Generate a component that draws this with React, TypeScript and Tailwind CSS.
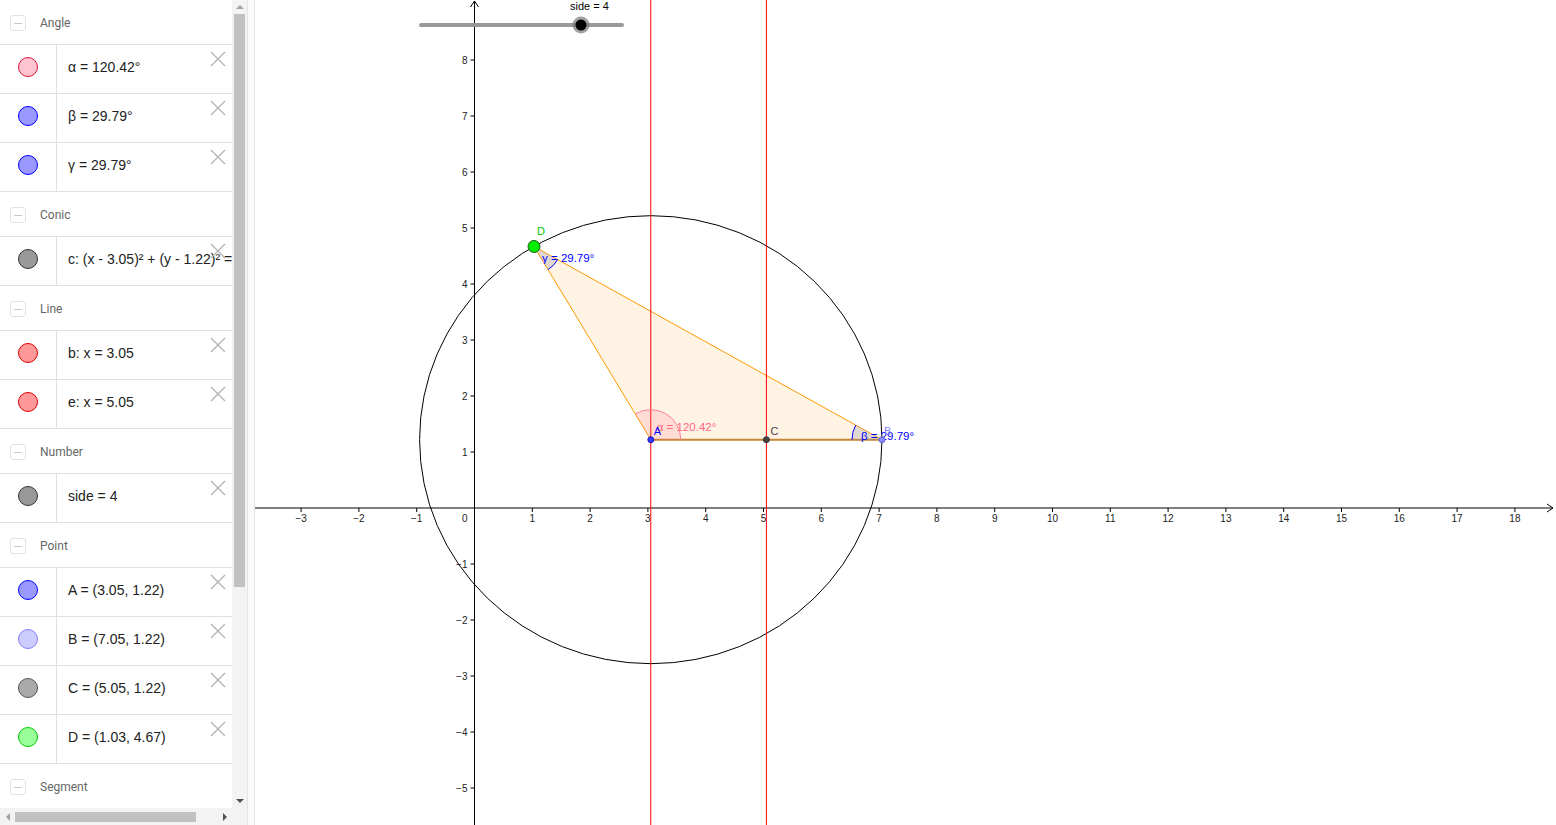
import React from 'react';

type Item = { text: string; fill: string; stroke: string };
type Section = { title: string; items: Item[] };

const sections: Section[] = [
  {
    title: 'Angle',
    items: [
      { text: 'α = 120.42°', fill: '#ffc4d0', stroke: '#dc143c' },
      { text: 'β = 29.79°', fill: '#9999ff', stroke: '#0000ff' },
      { text: 'γ = 29.79°', fill: '#9999ff', stroke: '#0000ff' },
    ],
  },
  {
    title: 'Conic',
    items: [{ text: 'c: (x - 3.05)² + (y - 1.22)² = 16', fill: '#999999', stroke: '#333333' }],
  },
  {
    title: 'Line',
    items: [
      { text: 'b: x = 3.05', fill: '#ff9999', stroke: '#e00000' },
      { text: 'e: x = 5.05', fill: '#ff9999', stroke: '#e00000' },
    ],
  },
  {
    title: 'Number',
    items: [{ text: 'side = 4', fill: '#999999', stroke: '#333333' }],
  },
  {
    title: 'Point',
    items: [
      { text: 'A = (3.05, 1.22)', fill: '#9999ff', stroke: '#0000ff' },
      { text: 'B = (7.05, 1.22)', fill: '#ccccff', stroke: '#7f7fff' },
      { text: 'C = (5.05, 1.22)', fill: '#aaaaaa', stroke: '#555555' },
      { text: 'D = (1.03, 4.67)', fill: '#99ff99', stroke: '#00cc00' },
    ],
  },
  { title: 'Segment', items: [] },
];

const CloseIcon = () => (
  <svg className="absolute right-[6px] top-[6px] w-4 h-4" viewBox="0 0 16 16" fill="none" stroke="#b4b4b4" strokeWidth="1.4">
    <path d="M1 1L15 15M15 1L1 15" />
  </svg>
);

const SectionHeader = ({ title }: { title: string }) => (
  <div className="h-[45px] pt-[2px] border-b border-[#e0e0e0] flex items-center">
    <div className="ml-[10px] w-4 h-4 rounded-[3px] border border-[#e2e2e2] flex items-center justify-center">
      <div className="w-[8px] h-px bg-[#c8c8c8]" />
    </div>
    <span className="ml-[14px] text-[12px] text-[#666] font-['Roboto',sans-serif]">{title}</span>
  </div>
);

const Row = ({ item }: { item: Item }) => (
  <div className="relative h-[49px] border-b border-[#e0e0e0] flex">
    <div className="w-[57px] shrink-0 pb-[4px] border-r border-[#e0e0e0] flex items-center justify-center">
      <div
        className="w-[20px] h-[20px] rounded-full border"
        style={{ backgroundColor: item.fill, borderColor: item.stroke }}
      />
    </div>
    <div className="pl-[11px] pb-[4px] flex items-center whitespace-nowrap overflow-hidden text-[14px] text-[#222] font-['Liberation_Sans',sans-serif]">
      {item.text}
    </div>
    <CloseIcon />
  </div>
);

const AlgebraPanel = () => (
  <div className="w-[247px] h-full flex shrink-0">
    <div className="w-[232px] h-full flex flex-col">
      <div className="flex-1 overflow-hidden">
        {sections.map((s) => (
          <div key={s.title}>
            <SectionHeader title={s.title} />
            {s.items.map((it) => (
              <Row key={it.text} item={it} />
            ))}
          </div>
        ))}
      </div>
      {/* horizontal scrollbar */}
      <div className="h-[17px] bg-[#f3f3f3] flex items-center">
        <div className="w-[15px] flex justify-center">
          <div className="w-0 h-0 border-y-[4px] border-y-transparent border-r-[4px] border-r-[#a3a3a3]" />
        </div>
        <div className="w-[181px] h-[10px] bg-[#c1c1c1]" />
        <div className="flex-1 flex justify-end pr-[5px]">
          <div className="w-0 h-0 border-y-[4px] border-y-transparent border-l-[4px] border-l-[#505050]" />
        </div>
      </div>
    </div>
    {/* vertical scrollbar */}
    <div className="w-[15px] h-full bg-[#f3f3f3] flex flex-col items-center">
      <div className="h-[14px] flex items-center">
        <div className="w-0 h-0 border-x-[4px] border-x-transparent border-b-[4px] border-b-[#a3a3a3]" />
      </div>
      <div className="w-[11px] h-[573px] bg-[#c1c1c1]" />
      <div className="flex-1" />
      <div className="h-[14px] flex items-center mb-[17px]">
        <div className="w-0 h-0 border-x-[4px] border-x-transparent border-t-[4px] border-t-[#505050]" />
      </div>
    </div>
  </div>
);

// coordinate system
const SX = 57.8;
const SY = 56;
const OX = 474.5;
const OY = 508;
const px = (x: number) => OX + x * SX;
const py = (y: number) => OY - y * SY;

const sector = (cx: number, cy: number, r: number, a1: number, a2: number) => {
  const rad = (a: number) => (a * Math.PI) / 180;
  const x1 = cx + r * Math.cos(rad(a1));
  const y1 = cy - r * Math.sin(rad(a1));
  const x2 = cx + r * Math.cos(rad(a2));
  const y2 = cy - r * Math.sin(rad(a2));
  const large = a2 - a1 > 180 ? 1 : 0;
  return {
    fill: `M${cx} ${cy} L${x1} ${y1} A${r} ${r} 0 ${large} 0 ${x2} ${y2} Z`,
    arc: `M${x1} ${y1} A${r} ${r} 0 ${large} 0 ${x2} ${y2}`,
  };
};

const Graphics = () => {
  const A = { x: px(3.05), y: py(1.22) };
  const B = { x: px(7.05), y: py(1.22) };
  const C = { x: px(5.05), y: py(1.22) };
  const D = { x: px(1.03), y: py(4.67) };
  const deg = (dx: number, dy: number) => (Math.atan2(-dy, dx) * 180) / Math.PI;
  const aAD = deg(D.x - A.x, D.y - A.y);
  const aBD = deg(D.x - B.x, D.y - B.y);
  const aDA = deg(A.x - D.x, A.y - D.y);
  const aDB = deg(B.x - D.x, B.y - D.y);
  const sa = sector(A.x, A.y, 30, 0, aAD);
  const sb = sector(B.x, B.y, 30, aBD, 180);
  const sg = sector(D.x, D.y, 27, aDA, aDB);
  const xs = Array.from({ length: 22 }, (_, i) => i - 3).filter((v) => v !== 0);
  const ys = Array.from({ length: 14 }, (_, i) => i - 5).filter((v) => v !== 0);
  const lbl = (v: number) => (v < 0 ? `−${-v}` : `${v}`);

  return (
    <svg className="flex-1 h-full block" viewBox="255 0 1301 825" fontFamily="Liberation Sans, Arial, sans-serif">
      {/* axes */}
      <line x1="255" y1={OY} x2="1553" y2={OY} stroke="#000" strokeWidth="1" />
      <polyline points={`1547,${OY - 4} 1553,${OY} 1547,${OY + 4}`} fill="none" stroke="#000" strokeWidth="1" />
      <line x1={OX} y1="825" x2={OX} y2="1" stroke="#000" strokeWidth="1" />
      <polyline points={`${OX - 4},7 ${OX},1 ${OX + 4},7`} fill="none" stroke="#000" strokeWidth="1" />
      {xs.map((v) => (
        <g key={`x${v}`}>
          <line x1={px(v)} y1={OY} x2={px(v)} y2={OY + 4} stroke="#000" strokeWidth="1" />
          <text x={px(v)} y={OY + 14} fontSize="10" textAnchor="middle" fill="#222">
            {lbl(v)}
          </text>
        </g>
      ))}
      {ys.map((v) => (
        <g key={`y${v}`}>
          <line x1={OX - 4} y1={py(v)} x2={OX} y2={py(v)} stroke="#000" strokeWidth="1" />
          <text x={OX - 7} y={py(v) + 4} fontSize="10" textAnchor="end" fill="#222">
            {lbl(v)}
          </text>
        </g>
      ))}
      <text x={OX - 7} y={OY + 14} fontSize="10" textAnchor="end" fill="#222">
        0
      </text>

      {/* triangle */}
      <polygon
        points={`${A.x},${A.y} ${B.x},${B.y} ${D.x},${D.y}`}
        fill="#fff3e4"
        stroke="#ff9900"
        strokeWidth="1"
      />
      <line x1={A.x} y1={A.y} x2={B.x} y2={B.y} stroke="#c4873a" strokeWidth="2" />

      {/* circle */}
      <ellipse cx={A.x} cy={A.y} rx={4 * SX} ry={4 * SY} fill="none" stroke="#000" strokeWidth="1" />

      {/* lines b, e */}
      <line x1={A.x} y1="0" x2={A.x} y2="825" stroke="#ff0000" strokeWidth="1" />
      <line x1={C.x} y1="0" x2={C.x} y2="825" stroke="#ff0000" strokeWidth="1" />

      {/* angles */}
      <path d={sa.fill} fill="#ff6680" fillOpacity="0.15" />
      <path d={sa.arc} fill="none" stroke="#ff8099" strokeWidth="1" />
      <path d={sb.fill} fill="#9a9aa8" fillOpacity="0.3" />
      <path d={sb.arc} fill="none" stroke="#0000ff" strokeWidth="1" />
      <path d={sg.fill} fill="#9a9aa8" fillOpacity="0.3" />
      <path d={sg.arc} fill="none" stroke="#0000ff" strokeWidth="1" />

      <text x={A.x + 6} y={A.y - 9} fontSize="11.5" fill="#ff6680">
        α = 120.42°
      </text>
      <text x={B.x - 21} y={B.y + 0} fontSize="11.5" fill="#0000ff">
        β = 29.79°
      </text>
      <text x={D.x + 8} y={D.y + 16} fontSize="11.5" fill="#0000ff">
        γ = 29.79°
      </text>

      {/* points */}
      <circle cx={A.x} cy={A.y} r="3" fill="#3b3bff" stroke="#0000aa" strokeWidth="0.8" />
      <circle cx={C.x} cy={C.y} r="3" fill="#444" stroke="#222" strokeWidth="0.8" />
      <circle cx={B.x} cy={B.y} r="3" fill="#8c8cff" stroke="#5050cc" strokeWidth="0.8" />
      <circle cx={D.x} cy={D.y} r="6" fill="#00ee00" stroke="#1a5a1a" strokeWidth="1" />
      <text x={A.x + 3} y={A.y - 5} fontSize="11" fill="#0000ff">
        A
      </text>
      <text x={C.x + 4} y={C.y - 5} fontSize="11" fill="#444">
        C
      </text>
      <text x={B.x + 2} y={B.y - 5} fontSize="11" fill="#8080ff">
        B
      </text>
      <text x={D.x + 3} y={D.y - 11} fontSize="11" fill="#00cc00">
        D
      </text>

      {/* slider */}
      <line x1="421" y1="25" x2="622" y2="25" stroke="#999" strokeWidth="4" strokeLinecap="round" />
      <circle cx="581" cy="25" r="8.5" fill="#777" fillOpacity="0.7" />
      <circle cx="581" cy="25" r="5.5" fill="#000" />
      <text x="570" y="10" fontSize="11" fill="#000">
        side = 4
      </text>
    </svg>
  );
};

export default function App() {
  return (
    <div className="w-screen h-screen overflow-hidden bg-white flex">
      <AlgebraPanel />
      <div className="w-[8px] h-full shrink-0 border-l border-r border-[#e4e4e4] bg-[#fafafa]" />
      <Graphics />
    </div>
  );
}
